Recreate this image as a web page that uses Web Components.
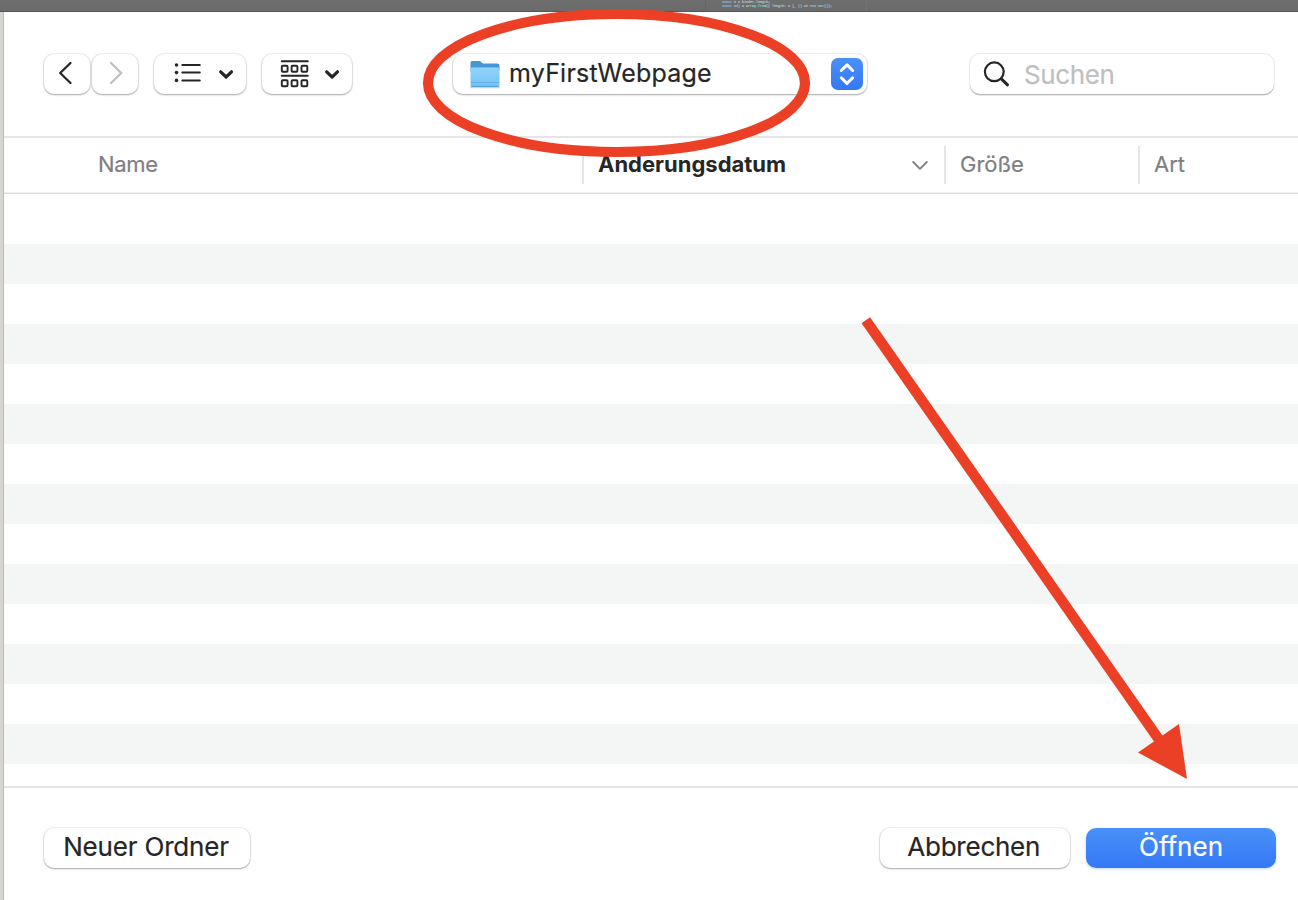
<!DOCTYPE html>
<html lang="de">
<head>
<meta charset="utf-8">
<title>Ordner öffnen</title>
<style>
html,body{margin:0;height:100%;overflow:hidden;background:#fff}
body{font-family:Inter,"Liberation Sans",sans-serif;color:#262626;-webkit-text-stroke:.2px currentColor}
</style>
</head>
<body>
<open-panel></open-panel>
<script>
function define(name, html) {
  const t = document.createElement('template');
  t.innerHTML = html;
  customElements.define(name, class extends HTMLElement {
    constructor() {
      super();
      this.attachShadow({ mode: 'open' }).append(t.content.cloneNode(true));
    }
  });
}

define('editor-strip', `
<style>
:host{display:block;box-sizing:border-box;height:12px;background:linear-gradient(#6e6e6e,#6b6b6b);border-bottom:1px solid #555;overflow:hidden}
pre{margin:0 0 0 705px;width:162px;height:11px;box-sizing:border-box;padding-left:16px;border-left:1px solid #666;border-right:1px solid #747474;font:3.33px/4px "Liberation Mono",monospace;color:#b4bcc2}
b{font-weight:400;color:#8fb3cf}i{font-style:normal;color:#98c4b5}
</style>
<pre><b>const</b> n = binder.length;
<b>const adj</b> = <i>Array.from</i>({ length: n }, () =&gt; <b>new</b> <i>Set</i>());</pre>`);

define('push-button', `
<style>
:host{display:flex;align-items:center;justify-content:center;box-sizing:border-box;height:40px;border-radius:10px;background:#fff;box-shadow:0 0 0 1px rgba(0,0,0,.06),0 1px 2px rgba(0,0,0,.3);font-size:26px;line-height:40px;white-space:nowrap}
:host([primary]){color:#fff;background:linear-gradient(#4a90f8,#3478f6);box-shadow:0 1px 3px rgba(52,120,246,.3)}
</style><slot></slot>`);

define('nav-icons', `
<style>
:host{display:flex;gap:2px}
push-button{width:46px}
svg{display:block}
</style>
<push-button><svg width="46" height="40" fill="none" stroke="#262626" stroke-width="2.3" stroke-linecap="round" stroke-linejoin="round"><path d="M26.5 9 16.2 19l10.3 10"/></svg></push-button>
<push-button><svg width="46" height="40" fill="none" stroke="#bfbfbf" stroke-width="2.3" stroke-linecap="round" stroke-linejoin="round"><path d="M19 9l10.3 10L19 29"/></svg></push-button>`);

define('view-menus', `
<style>
:host{display:flex;gap:16px}
.list{width:92px}.group{width:90px}
svg{display:block}
</style>
<push-button class="list"><svg width="92" height="40" fill="none" stroke="#262626" stroke-width="2" stroke-linecap="round">
<path d="M28.300 11h17.500M28.300 18.600h17.500M28.300 26.400h17.500"/><g fill="#262626" stroke="none"><circle cx="22.500" cy="11" r="1.800"/><circle cx="22.500" cy="18.600" r="1.800"/><circle cx="22.500" cy="26.400" r="1.800"/></g>
<path stroke-width="3.2" stroke-linejoin="round" d="M66.7 17.8l5.4 5.2 5.4-5.2"/></svg></push-button>
<push-button class="group"><svg width="90" height="40" fill="none" stroke="#262626" stroke-width="2" stroke-linecap="round">
<path d="M19.800 7.200h26M19.800 21.800h26"/>
<g stroke-width="1.9"><rect x="19.800" y="11.800" width="5.800" height="6" rx="1"/><rect x="29.600" y="11.800" width="5.800" height="6" rx="1"/><rect x="39.500" y="11.800" width="5.800" height="6" rx="1"/><rect x="19.800" y="26.300" width="5.800" height="6" rx="1"/><rect x="29.600" y="26.300" width="5.800" height="6" rx="1"/><rect x="39.500" y="26.300" width="5.800" height="6" rx="1"/></g>
<path stroke-width="3.2" stroke-linejoin="round" d="M64.7 17.8l5.4 5.2 5.4-5.2"/></svg></push-button>`);

define('folder-popup', `
<style>
:host{display:flex;align-items:center;box-sizing:border-box;width:414px;height:40px;padding:0 4px 0 15px;border-radius:10px;background:#fff;box-shadow:0 0 0 1px rgba(0,0,0,.06),0 1px 2px rgba(0,0,0,.3);font-size:25px}
.folder{margin-right:7px}
span{flex:1;line-height:38px;height:40px;letter-spacing:.22px}
</style>
<svg class="folder" width="34" height="34" viewBox="0 0 34 34">
<defs><linearGradient id="f" x2="0" y2="1"><stop stop-color="#91d4fb"/><stop offset="1" stop-color="#74c2f4"/></linearGradient></defs>
<path d="M3 30.300h28" stroke="#b9b9b9" stroke-width="2" stroke-linecap="round" opacity=".65"/>
<path d="M2.500 6.200c0-1.600.6-2.200 2-2.200h6.200c1.600 0 2 .5 3 1.400.8.8 1.300 1.100 2.600 1.100h12.900c1.500 0 2.300.8 2.300 2.300V14h-29z" fill="#4698d5"/>
<path d="M2.500 12.200c0-1 .6-1.600 1.600-1.600h25.800c1 0 1.600.6 1.600 1.600V28.300c0 1-.6 1.600-1.600 1.600H4.100c-1 0-1.600-.6-1.600-1.600z" fill="url(#f)"/>
<path d="M3 25.500h28" stroke="#5eade0" stroke-width=".8"/><path d="M3.500 29.300h27" stroke="#4c9fd8"/>
</svg>
<span>myFirstWebpage</span>
<svg width="32" height="32"><defs><linearGradient id="b" x2="0" y2="1"><stop stop-color="#4a90f8"/><stop offset="1" stop-color="#3478f6"/></linearGradient></defs><rect width="32" height="32" rx="7" fill="url(#b)"/><path d="M10.300 12.500 16 6.900l5.700 5.600M10.300 19.800 16 25.400l5.700-5.600" fill="none" stroke="#fff" stroke-width="3" stroke-linecap="round" stroke-linejoin="round"/></svg>`);

define('search-field', `
<style>
:host{display:flex;align-items:center;box-sizing:border-box;width:304px;height:40px;padding-left:12px;border-radius:10px;background:#fff;box-shadow:0 0 0 1px rgba(0,0,0,.08),0 1.5px .5px rgba(0,0,0,.2);font-size:26px;color:#bfbfbf}
svg{margin-right:10px}
span{height:40px;line-height:42px;letter-spacing:-.4px}
</style>
<svg width="32" height="36" fill="none" stroke="#262626" stroke-linecap="round"><circle cx="12.300" cy="15.800" r="9.400" stroke-width="2.200"/><path d="M19.300 22.800l6.200 6" stroke-width="3"/></svg><span>Suchen</span>`);

define('panel-toolbar', `
<style>
:host{display:flex;box-sizing:border-box;height:126px;padding:42px 24px 0 40px;border-bottom:2px solid #e5e5e5}
view-menus{margin-left:16px}folder-popup{margin-left:101px}search-field{margin-left:auto}
</style>
<nav-icons></nav-icons><view-menus></view-menus><folder-popup></folder-popup><search-field></search-field>`);

define('column-header', `
<style>
:host{display:grid;grid-template-columns:578px 362px 194px 1fr;box-sizing:border-box;height:56px;padding:8px 0;border-bottom:1px solid #dcdcdc;box-shadow:inset 0 -1px #f0f0f0;font-size:22px;line-height:37px;color:#7f7f7f}
div{display:flex;align-items:center;justify-content:space-between;box-sizing:border-box;height:38px;padding-left:14px;border-left:2px solid #e5e5e5;white-space:nowrap}
.name{padding-left:94px;border:0;letter-spacing:-.3px}.date{color:#262626;font-weight:700;-webkit-text-stroke:0}
span{height:38px}svg{margin-right:16.500px}
</style>
<div class="name"><span>Name</span></div>
<div class="date"><span>Änderungsdatum</span><svg width="16" height="12" fill="none" stroke="#7f7f7f" stroke-width="1.800" stroke-linecap="round" stroke-linejoin="round"><path d="M1.200 3l6.800 6.800L14.800 3"/></svg></div>
<div class="size"><span>Größe</span></div>
<div class="kind"><span>Art</span></div>`);

define('file-list', `
<style>
:host{display:block;height:592px;box-sizing:border-box;padding-top:10px;overflow:hidden}
div{height:40px}div:nth-of-type(even){background:#f4f6f5}
</style>` + '<div></div>'.repeat(15));

define('panel-footer', `
<style>
:host{display:flex;flex:1;box-sizing:border-box;padding:40px 22px 0 40px;border-top:2px solid #e5e5e5}
.new{width:206px}.cancel{width:190px;margin-left:auto}.open{width:190px;margin-left:16px}
span{height:42px}
.new span{letter-spacing:-.18px;margin-right:2px}.cancel span{letter-spacing:-.25px;margin-right:2.500px}
</style>
<push-button class="new"><span>Neuer Ordner</span></push-button>
<push-button class="cancel"><span>Abbrechen</span></push-button>
<push-button class="open" primary><span>Öffnen</span></push-button>`);

define('red-marks', `
<style>:host{position:absolute;inset:0;pointer-events:none}svg{display:block}</style>
<svg width="1298" height="900"><ellipse cx="616.500" cy="83" rx="188.500" ry="69" fill="none" stroke="#eb4025" stroke-width="10.200"/><path d="M865.800 320.200 1160 741" stroke="#eb4025" stroke-width="10.400"/><path d="M1179 724l8 55-49-26.500z" fill="#eb4025"/></svg>`);

define('open-panel', `
<style>
:host{display:flex;flex-direction:column;position:relative;width:1298px;height:900px;overflow:hidden}
main{display:flex;flex-direction:column;flex:1;box-sizing:border-box;border-left:1px solid #bdbbb8;margin-left:3px;background:#fff}
section{display:flex;flex:1;background:#d6d5d2}
</style>
<editor-strip></editor-strip>
<section><main><panel-toolbar></panel-toolbar><column-header></column-header><file-list></file-list><panel-footer></panel-footer></main></section>
<red-marks></red-marks>`);
</script>
</body>
</html>
